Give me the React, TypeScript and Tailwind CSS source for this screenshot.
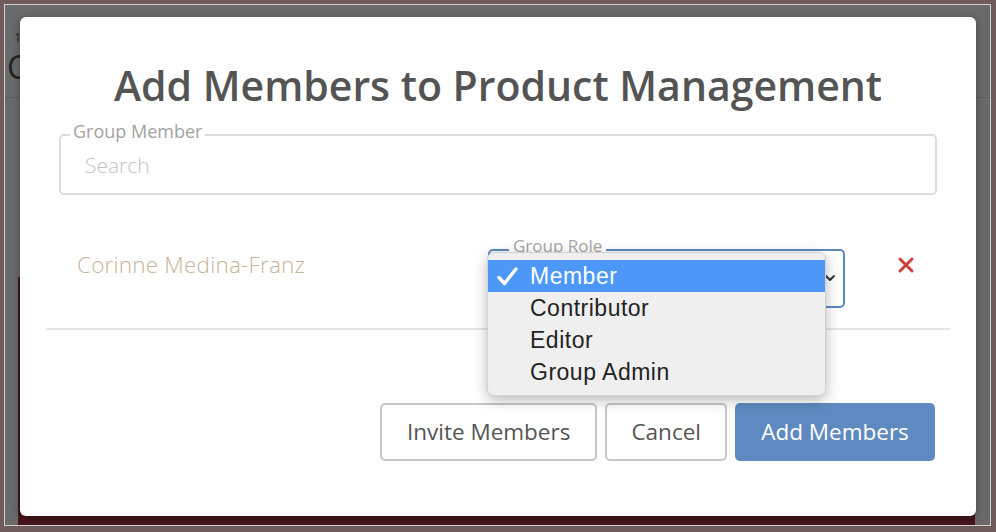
import React from 'react';
import { X, ChevronDown } from 'lucide-react';

const roles = ['Member', 'Contributor', 'Editor', 'Group Admin'];

export default function App() {
  return (
    <div className="w-[996px] h-[532px] bg-[#6f5b59] pt-[4px] pb-[6px] pl-[4px] pr-[5px]">
      <div className="relative h-full border border-[#cfcfcf] bg-[#6a6a6a] overflow-hidden">
        {/* page behind the dialog */}
        <div className="absolute left-[9px] top-[26px] text-[13px] leading-none text-[#222] font-['Open_Sans',sans-serif]">1</div>
        <div className="absolute left-[2px] top-[46px] text-[32px] leading-none text-[#222] font-['Open_Sans',sans-serif]">C</div>
        <div className="absolute left-0 right-0 top-[92px] h-px bg-[#5d5d5d]" />
        <div className="absolute left-[13px] right-[15px] top-[272px] bottom-[0px] bg-[#47161a]" />

        {/* dialog */}
        <div className="absolute left-[15px] top-[12px] w-[956px] h-[499px] bg-white rounded-[6px] shadow-[0_2px_10px_rgba(0,0,0,0.35)] font-['Open_Sans',sans-serif] px-[26px] pt-[42px]">
          <h1 className="text-center text-[41px] leading-[52px] font-semibold text-[#545454]">
            Add Members to Product Management
          </h1>

          <div className="mt-[23px] mx-[13px] relative h-[61px] border-2 border-[#dcdcdc] rounded-[5px] flex items-center px-[24px]">
            <span className="absolute left-[9px] -top-[17px] bg-white px-[3px] text-[18px] leading-[24px] text-[#a3a3a3]">
              Group Member
            </span>
            <span className="text-[21px] text-[#c3c3c3] font-light pt-[2px]">Search</span>
          </div>

          <div className="flex items-center h-[135px] border-b-2 border-[#e6e6e6] pt-[7px]">
            <div className="w-[442px] pl-[31px] text-[22.5px] font-light text-[#c7b497] tracking-[0.2px]">
              Corinne Medina-Franz
            </div>
            <div className="relative w-[357px] h-[59px] border-2 border-[#5b88c3] rounded-[5px] mt-[27px]">
              <span className="absolute left-[19px] -top-[16px] bg-white px-[4px] text-[17px] leading-[22px] text-[#a6a6a6]">
                Group Role
              </span>
              <ChevronDown className="absolute right-[5px] top-[19px] text-[#333]" size={16} strokeWidth={3} />
              <div className="absolute -left-[3px] top-[1px] w-[339px] bg-[#efefef] rounded-[7px] border border-[#d2d2d2] shadow-[0_4px_14px_rgba(0,0,0,0.28)] pt-[7px] pb-[7px] font-['Liberation_Sans',Arial,sans-serif]">
                {roles.map((r, i) => (
                  <div
                    key={r}
                    className={`relative h-[32px] flex items-center pl-[42px] text-[23px] tracking-[0.5px] ${
                      i === 0 ? 'bg-[#4c97f7] text-white' : 'text-[#232323]'
                    }`}
                  >
                    {i === 0 && (
                      <svg className="absolute left-[9px] top-[7px]" width="21" height="19" viewBox="0 0 21 19">
                        <path d="M2 10.5 L7.5 16.5 L19 2" fill="none" stroke="white" strokeWidth="3.4" strokeLinecap="round" strokeLinejoin="round" />
                      </svg>
                    )}
                    {r}
                  </div>
                ))}
              </div>
            </div>
            <div className="flex-1 flex justify-end pr-[32px]">
              <X size={24} strokeWidth={3} className="text-[#c9403f]" />
            </div>
          </div>

          <div className="flex justify-end gap-[8px] mt-[73px] mr-[15px]">
            <button className="h-[58px] px-[25px] border-2 border-[#c6c6c6] rounded-[5px] text-[22.5px] text-[#555]">
              Invite Members
            </button>
            <button className="h-[58px] px-[24px] border-2 border-[#c6c6c6] rounded-[5px] text-[22.5px] text-[#555]">
              Cancel
            </button>
            <button className="h-[58px] w-[200px] rounded-[5px] bg-[#5f8ac1] text-[22.5px] text-white">
              Add Members
            </button>
          </div>
        </div>
      </div>
    </div>
  );
}
